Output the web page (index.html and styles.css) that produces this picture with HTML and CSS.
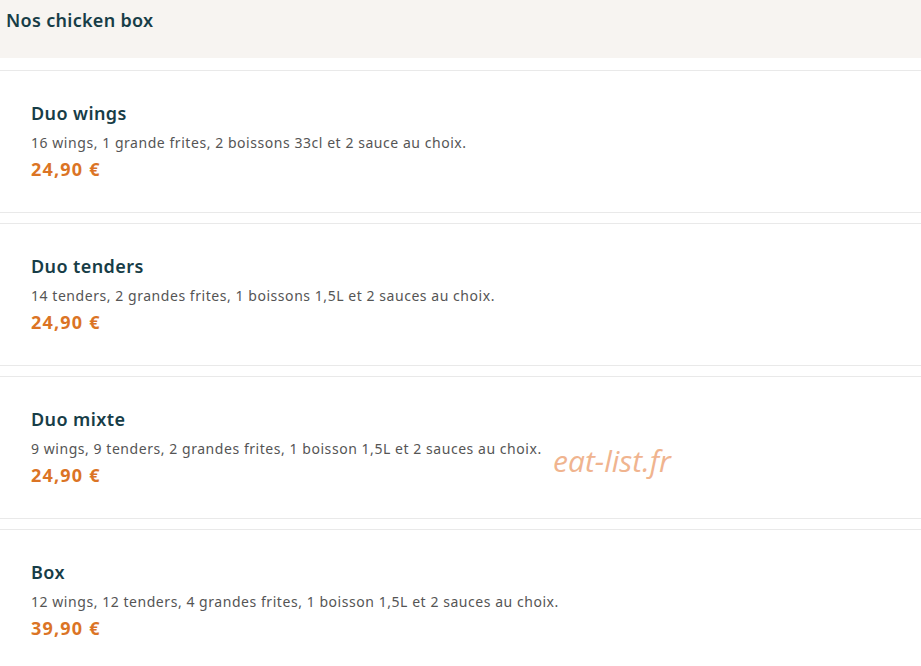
FILE: index.html
```html
<!DOCTYPE html>
<html>

<head>
    <title>Nos chicken box</title>
    <link rel="stylesheet" href="styles.css">
</head>

<body>
    <div class="category-header">
        <h2>Nos chicken box</h2>
    </div>

    <div class="menu-list">
        <div class="menu-item">
            <h3>Duo wings</h3>
            <p class="description">16 wings, 1 grande frites, 2 boissons 33cl et 2 sauce au choix.</p>
            <div class="price">24,90 €</div>
        </div>
        <div class="menu-item">
            <h3>Duo tenders</h3>
            <p class="description">14 tenders, 2 grandes frites, 1 boissons 1,5L et 2 sauces au choix.</p>
            <div class="price">24,90 €</div>
        </div>
        <div class="menu-item">
            <h3>Duo mixte</h3>
            <p class="description">9 wings, 9 tenders, 2 grandes frites, 1 boisson 1,5L et 2 sauces au choix.</p>
            <div class="price">24,90 €</div>
        </div>
        <div class="menu-item">
            <h3>Box</h3>
            <p class="description">12 wings, 12 tenders, 4 grandes frites, 1 boisson 1,5L et 2 sauces au choix.</p>
            <div class="price">39,90 €</div>
        </div>
    </div>

    <div class="watermark">eat-list.fr</div>
</body>

</html>
```

FILE: styles.css
```css
body {
    font-family: "Noto Sans", sans-serif;
    background-color: #fff;
    margin: 0;
    color: #173d47;
}

.category-header {
    background-color: #f7f4f1;
    height: 58px;
    padding: 9px 6px;
    box-sizing: border-box;
}

.category-header h2 {
    font-size: 18px;
    line-height: 22px;
    font-weight: 600;
    letter-spacing: 0.3px;
    margin: 0;
}

.menu-list {
    margin-top: 12px;
}

.menu-item {
    border-top: 1px solid #e9e9e9;
    border-bottom: 1px solid #e9e9e9;
    padding: 31px 31px 32px;
    margin-bottom: 10px;
}

.menu-item h3 {
    font-size: 18px;
    line-height: 22px;
    font-weight: 600;
    letter-spacing: 0.4px;
    margin: 0 0 9px;
}

.description {
    font-size: 14px;
    line-height: 20px;
    letter-spacing: 0.55px;
    color: #555;
    margin: 0 0 5px;
}

.price {
    font-size: 18px;
    line-height: 22px;
    font-weight: 700;
    letter-spacing: 1.2px;
    color: #db7425;
}

.watermark {
    position: absolute;
    left: 553px;
    top: 440px;
    font-family: "Open Sans", sans-serif;
    font-style: italic;
    font-size: 30px;
    color: #f0b48f;
}
```
